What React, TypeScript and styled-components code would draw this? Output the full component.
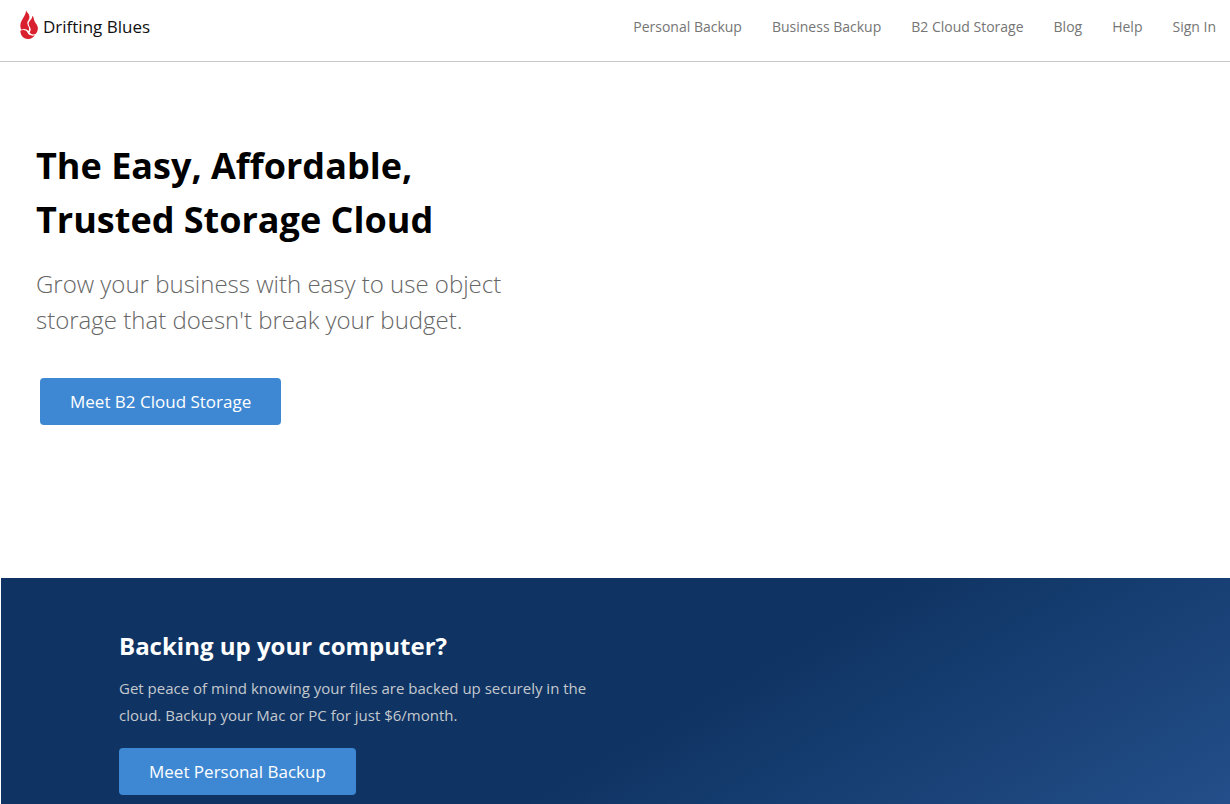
import React from 'react';
import styled, { createGlobalStyle } from 'styled-components';

const GlobalStyle = createGlobalStyle`
  *, *::before, *::after { box-sizing: border-box; }
  body {
    margin: 0;
    background: #fff;
    font-family: 'Open Sans', sans-serif;
  }
  h1, h2, p, ul { margin: 0; padding: 0; }
`;

const Page = styled.div`
  display: flex;
  flex-direction: column;
  min-height: 100vh;
`;

const Header = styled.header`
  display: flex;
  justify-content: space-between;
  align-items: flex-start;
  padding: 10px 14px 17px 20px;
  border-bottom: 1px solid #c8c8c8;
`;

const Brand = styled.a`
  display: flex;
  align-items: flex-start;
  gap: 5px;
  color: #111;
  font-size: 17px;
  line-height: 34px;
  text-decoration: none;
  white-space: nowrap;
`;

const NavList = styled.ul`
  display: flex;
  gap: 30px;
  list-style: none;
`;

const NavLink = styled.a`
  display: block;
  color: #757575;
  font-size: 14px;
  line-height: 34px;
  text-decoration: none;
  white-space: nowrap;
`;

const Hero = styled.section`
  padding: 77px 36px 153px;
`;

const HeroTitle = styled.h1`
  color: #000;
  font-size: 36px;
  font-weight: 700;
  line-height: 54px;
`;

const HeroText = styled.p`
  margin-top: 19px;
  color: #666;
  font-size: 24px;
  font-weight: 300;
  line-height: 36px;
`;

const HeroAction = styled.div`
  margin: 40px 4px 0;
`;

const ButtonLink = styled.a`
  display: inline-block;
  padding: 0 30px;
  border-radius: 4px;
  background: #3e88d3;
  color: #fff;
  font-size: 17px;
  line-height: 47px;
  text-decoration: none;
  vertical-align: top;
`;

const Promo = styled.section`
  flex: 1;
  margin-left: 1px;
  padding: 48px 118px 9px;
  background: linear-gradient(150deg, #0f3463 56%, #234e89 100%);
`;

const PromoTitle = styled.h2`
  color: #fff;
  font-size: 24px;
  font-weight: 700;
  line-height: 40px;
`;

const PromoText = styled.p`
  margin: 9px 0 19px;
  color: #c4c8ce;
  font-size: 15px;
  line-height: 27px;
`;

function Flame() {
  return (
    <svg width="18" height="30" viewBox="0 0 54 90" fill="#d9202e" aria-hidden="true">
      <path d="M18 1 C19 17 1 30 1 47 C1 53 3 57 5 59 C12 55 20 57 26 63 C31 53 22 48 22 39 C22 33 30 28 28 18 C27 11 20 8 18 1 Z" />
      <path d="M37 17 C38 29 25 33 26 42 C27 50 37 56 29 67 C31 72 37 75 47 72 C52 67 55 57 53 50 C50 40 43 36 42 29 C41 23 41 20 37 17 Z" />
      <path d="M1 62 C9 58 19 60 22 67 C25 75 34 79 45 76 C39 84 31 88 23 87 C10 86 1 75 1 62 Z" />
    </svg>
  );
}

const links = [
  'Personal Backup',
  'Business Backup',
  'B2 Cloud Storage',
  'Blog',
  'Help',
  'Sign In',
];

export default function App() {
  return (
    <Page>
      <GlobalStyle />
      <Header>
        <Brand href="#">
          <Flame />
          Drifting Blues
        </Brand>
        <nav aria-label="Main">
          <NavList>
            {links.map((label) => (
              <li key={label}>
                <NavLink href="#">{label}</NavLink>
              </li>
            ))}
          </NavList>
        </nav>
      </Header>
      <Hero>
        <HeroTitle>
          The Easy, Affordable,
          <br />
          Trusted Storage Cloud
        </HeroTitle>
        <HeroText>
          Grow your business with easy to use object
          <br />
          storage that doesn't break your budget.
        </HeroText>
        <HeroAction>
          <ButtonLink href="#">Meet B2 Cloud Storage</ButtonLink>
        </HeroAction>
      </Hero>
      <Promo>
        <PromoTitle>Backing up your computer?</PromoTitle>
        <PromoText>
          Get peace of mind knowing your files are backed up securely in the
          <br />
          cloud. Backup your Mac or PC for just $6/month.
        </PromoText>
        <ButtonLink href="#">Meet Personal Backup</ButtonLink>
      </Promo>
    </Page>
  );
}
